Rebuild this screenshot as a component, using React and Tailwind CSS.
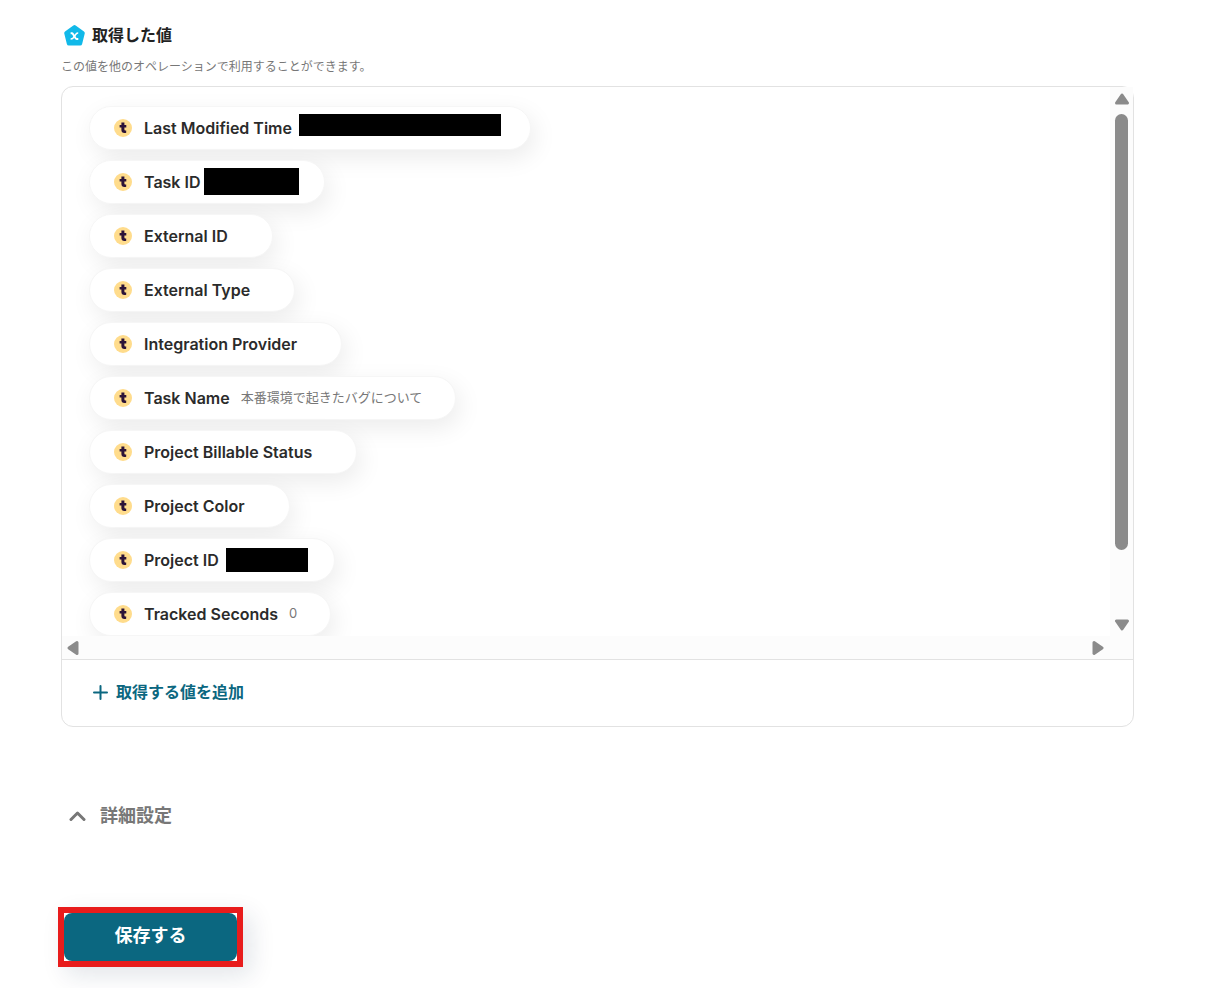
const values = [
    { label: "Last Modified Time", masked: "w-[194px]", mask: "-left-1 -right-1 top-[-2px] h-[22px]" },
    { label: "Task ID", masked: "w-[79px]", mask: "-left-[8px] -right-2 top-[-2px] h-[27px]" },
    { label: "External ID" },
    { label: "External Type" },
    { label: "Integration Provider" },
    { label: "Task Name", value: "本番環境で起きたバグについて" },
    { label: "Project Billable Status" },
    { label: "Project Color" },
    { label: "Project ID", masked: "w-[71px]", mask: "-left-1 -right-[7px] top-0 h-6" },
    { label: "Tracked Seconds", value: "0" },
]

function TogglIcon() {
    return (
        <svg viewBox="0 0 18 18" className="w-[18px] h-[18px] shrink-0" aria-hidden="true">
            <circle cx="9" cy="9" r="9" fill="#ffdc8c" />
            <path d="M7.400 3.600h3v2.500h1.900v2.300h-1.900v2.200c0 .7.300 1 .9 1 .3 0 .6 0 .9-.1v2.300c-.5.200-1 .3-1.700.3-2.100 0-3.100-1-3.100-3V8.400H5.600V6.100h1.800z" fill="#2c1338" />
        </svg>
    )
}

function VariableIcon() {
    return (
        <svg viewBox="0 0 24 24" className="w-6 h-6 shrink-0" aria-hidden="true">
            <path d="M12.500 4L20.800 10 18.200 20.500H6.800L4.200 10z" fill="#11b9e9" stroke="#11b9e9" strokeWidth="4" strokeLinejoin="round" />
            <path d="M8.600 10.200h1.300q.6 0 .9.600l2.800 4.500q.4.600 1 .6h1.700" fill="none" stroke="#fff" strokeWidth="2" />
            <path d="M16.200 10.100q-1.400 0-2.100.9l-3 4q-.8 1-2.500 1" fill="none" stroke="#fff" strokeWidth="1.500" />
        </svg>
    )
}

function Arrow({ className }) {
    return (
        <svg viewBox="0 0 16 12" className={"w-4 h-3 " + className} aria-hidden="true">
            <path d="M8 2L13.500 10H2.500z" fill="#8b8b8b" stroke="#8b8b8b" strokeWidth="3" strokeLinejoin="round" />
        </svg>
    )
}

function ValuePill({ item }) {
    return (
        <li className="flex items-center shrink-0 w-fit h-11 pl-6 pr-[33px] bg-white rounded-full border border-[#f6f6f6] shadow-[4px_8px_24px_rgba(0,0,0,0.08)]">
            <TogglIcon />
            <span className="ml-3 text-base font-semibold text-[#2b2b2b] whitespace-nowrap">{item.label}</span>
            <span className="ml-[11px] text-[13px] text-[#777] whitespace-nowrap">
                {item.masked ? (
                    <span className={"relative block h-6 " + item.masked}>
                        <span className={"absolute bg-black " + item.mask}></span>
                    </span>
                ) : item.value}
            </span>
        </li>
    )
}

function App() {
    return (
        <main className="min-h-screen bg-white pl-[61px] pr-[91px] pt-[23px] pb-5 font-['Inter','Noto_Sans_CJK_JP',sans-serif] text-[#222]">
            <div className="flex items-center gap-[6px] pl-px">
                <VariableIcon />
                <h2 className="text-base leading-6 font-bold">取得した値</h2>
            </div>
            <p className="mt-[10px] text-xs leading-5 text-[#777]">この値を他のオペレーションで利用することができます。</p>

            <section className="mt-[9px] border border-[#e2e2e2] rounded-xl">
                <div className="grid grid-cols-[1fr_23px] grid-rows-[549px_23px] border-b border-[#e2e2e2]">
                    <ul className="flex flex-col gap-[10px] pl-[27px] pt-[19px] overflow-hidden rounded-tl-xl">
                        {values.map((item) => <ValuePill key={item.label} item={item} />)}
                    </ul>
                    <div className="flex flex-col items-center bg-[#fcfcfc] pt-[6px] pb-[5px]">
                        <Arrow className="" />
                        <div className="mt-[9px] w-[13px] h-[436px] rounded-full bg-[#8b8b8b]"></div>
                        <Arrow className="mt-auto rotate-180" />
                    </div>
                    <div className="flex items-center justify-between bg-[#fcfcfc] pl-[3px] pr-1">
                        <Arrow className="-rotate-90" />
                        <Arrow className="rotate-90" />
                    </div>
                    <div className="bg-[#fcfcfc]"></div>
                </div>
                <div className="h-[66px] pl-[31px] pt-5">
                    <button type="button" className="flex items-center gap-2 text-base font-bold text-[#0b6780] cursor-pointer">
                        <svg viewBox="0 0 15 15" className="w-[15px] h-[15px]" aria-hidden="true">
                            <path d="M7.500 1v13M1 7.500h13" stroke="currentColor" strokeWidth="2" strokeLinecap="round" />
                        </svg>
                        取得する値を追加
                    </button>
                </div>
            </section>

            <button type="button" className="flex items-center gap-[14px] mt-[75px] ml-2 text-lg leading-7 font-bold text-[#777] cursor-pointer">
                <svg viewBox="0 0 17 12" className="w-[17px] h-3" aria-hidden="true">
                    <path d="M2 9.500l6.500-6.500 6.500 6.500" fill="none" stroke="currentColor" strokeWidth="3" strokeLinecap="round" strokeLinejoin="round" />
                </svg>
                詳細設定
            </button>

            <div className="mt-[77px] -ml-[3px] w-fit border-[6px] border-[#e81c1c] shadow-[8px_8px_24px_rgba(20,40,70,0.12)]">
                <button type="button" className="block w-[173px] h-12 pb-[2px] rounded-lg bg-[#0b6780] text-lg font-bold text-white cursor-pointer">
                    保存する
                </button>
            </div>
        </main>
    )
}

export default App;
